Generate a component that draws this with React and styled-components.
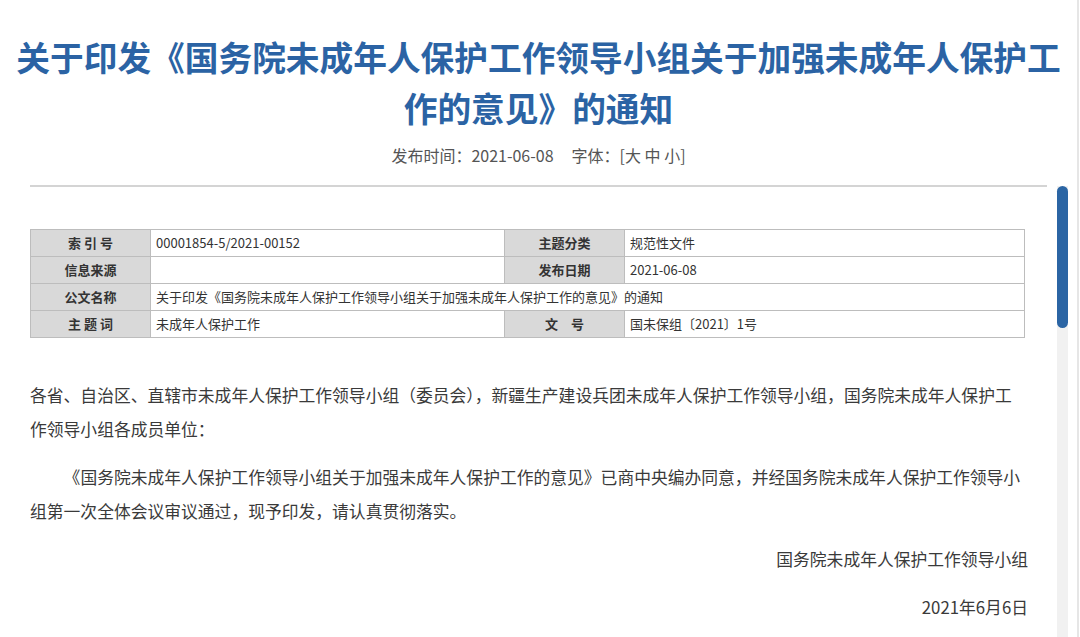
import React from 'react';
import styled, { createGlobalStyle } from 'styled-components';

const GlobalStyle = createGlobalStyle`
  html, body {
    margin: 0;
    padding: 0;
    background: #fff;
  }
  body {
    font-family: "Noto Sans CJK SC", "Noto Sans", sans-serif;
    color: #333;
  }
`;

const Page = styled.div`
  display: grid;
  grid-template-columns: 1057px 1fr;
  grid-template-rows: auto 1fr;
  width: 1079px;
  height: 637px;
  overflow: hidden;
  border-right: 2px solid #e6e6e6;
  box-sizing: border-box;
`;

const Header = styled.header`
  grid-column: 1 / -1;
  padding: 31px 10px 0;
  text-align: center;
`;

const Title = styled.h1`
  margin: 0;
  font-size: 33.7px;
  line-height: 51px;
  font-weight: 700;
  color: #2b63a4;
`;

const Meta = styled.div`
  margin-top: 10px;
  font-size: 16px;
  line-height: 24px;
  color: #555;
`;

const MetaGap = styled.span`
  display: inline-block;
  width: 18px;
`;

const Main = styled.main`
  padding: 0 10px 0 30px;
`;

const Rule = styled.hr`
  margin: 18px 0 0;
  height: 0;
  border: 0;
  border-top: 2px solid #d4d4d4;
`;

const InfoTable = styled.table`
  margin-top: 42px;
  width: 994px;
  border-collapse: collapse;
  table-layout: fixed;
  font-size: 13px;
  color: #333;
`;

const Cell = styled.td`
  height: 26px;
  padding: 0 5px;
  border: 1px solid #bdbdbd;
  line-height: 26px;
  white-space: nowrap;
  background: ${p => (p.$label ? '#d9d9d9' : '#fff')};
  font-weight: ${p => (p.$label ? 700 : 400)};
  text-align: ${p => (p.$label ? 'center' : 'left')};
`;

const Body = styled.article`
  margin-top: 40px;
  width: 998px;
  font-size: 16.8px;
  line-height: 34px;
  color: #3a3a3a;
`;

const Para = styled.p`
  margin: 0 0 14px;
  text-indent: ${p => (p.$indent ? '2em' : '0')};
  text-align: ${p => (p.$right ? 'right' : 'left')};
`;

const Rail = styled.aside`
  display: flex;
  flex-direction: column;
  padding-top: 19px;
`;

const Track = styled.div`
  flex: 1;
  width: 11px;
  background: #f1f1f1;
`;

const Thumb = styled.div`
  height: 142px;
  border-radius: 6px;
  background: #2b65a4;
`;

const rows = [
  [['索 引 号', '00001854-5/2021-00152'], ['主题分类', '规范性文件']],
  [['信息来源', ''], ['发布日期', '2021-06-08']],
  [['公文名称', '关于印发《国务院未成年人保护工作领导小组关于加强未成年人保护工作的意见》的通知']],
  [['主 题 词', '未成年人保护工作'], ['文　号', '国未保组〔2021〕1号']],
];

export default function App() {
  return (
    <>
      <GlobalStyle />
      <Page>
        <Header>
          <Title>关于印发《国务院未成年人保护工作领导小组关于加强未成年人保护工作的意见》的通知</Title>
          <Meta>
            发布时间：2021-06-08<MetaGap />字体：[大 中 小]
          </Meta>
        </Header>
        <Main>
          <Rule />
          <InfoTable>
            <colgroup>
              <col style={{ width: 120 }} />
              <col style={{ width: 354 }} />
              <col style={{ width: 120 }} />
              <col style={{ width: 400 }} />
            </colgroup>
            <tbody>
              {rows.map((row, i) => (
                <tr key={i}>
                  {row.map(([label, value], j) => (
                    <React.Fragment key={j}>
                      <Cell $label>{label}</Cell>
                      <Cell colSpan={row.length === 1 ? 3 : 1}>{value}</Cell>
                    </React.Fragment>
                  ))}
                </tr>
              ))}
            </tbody>
          </InfoTable>
          <Body>
            <Para>
              各省、自治区、直辖市未成年人保护工作领导小组（委员会），新疆生产建设兵团未成年人保护工作领导小组，国务院未成年人保护工作领导小组各成员单位：
            </Para>
            <Para $indent>
              《国务院未成年人保护工作领导小组关于加强未成年人保护工作的意见》已商中央编办同意，并经国务院未成年人保护工作领导小组第一次全体会议审议通过，现予印发，请认真贯彻落实。
            </Para>
            <Para $right>国务院未成年人保护工作领导小组</Para>
            <Para $right>2021年6月6日</Para>
          </Body>
        </Main>
        <Rail>
          <Track>
            <Thumb />
          </Track>
        </Rail>
      </Page>
    </>
  );
}
